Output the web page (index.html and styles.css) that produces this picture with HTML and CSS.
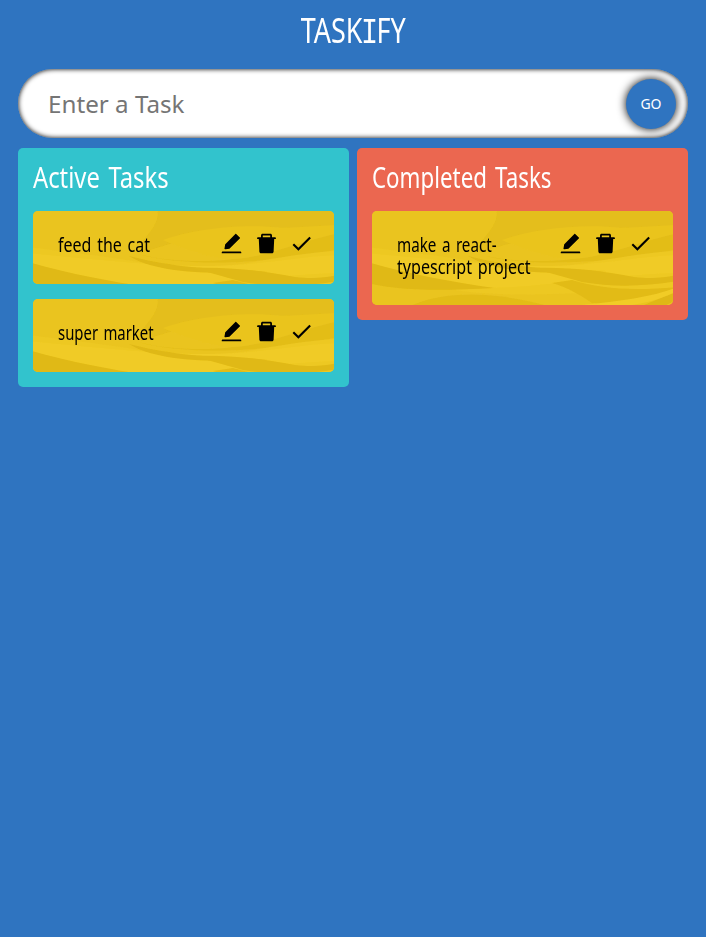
FILE: index.html
```html
<!DOCTYPE html>
<html lang="en">
<head>
<meta charset="utf-8">
<title>Taskify</title>
<link rel="stylesheet" href="styles.css">
</head>
<body>
<svg class="defs" aria-hidden="true">
  <defs>
    <filter id="soft" x="0" y="0" width="1" height="1"><feGaussianBlur stdDeviation="0.7"/></filter>
  </defs>
  <symbol id="waves" viewBox="0 0 301 94">
    <rect width="301" height="94" fill="#eac41f"/>
    <g filter="url(#soft)">
    <path d="M124 -5H306V22C250 10 170 20 108 42C100 30 130 20 124 -5Z" fill="#e4be1a"/>
    <path d="M130 29C160 18 210 12 250 17L306 14V55C250 60 180 52 130 29Z" fill="#eac41f"/>
    <path d="M306 22C260 32 235 46 200 48C170 52 130 50 105 43C150 56 230 54 306 38Z" fill="#e3bd19"/>
    <path d="M-5 36C40 42 80 46 110 52C190 66 230 44 306 40V78C230 80 150 88 90 80C50 74 30 70 -5 62Z" fill="#edc823"/>
    <path d="M-5 42C60 48 130 56 180 55C230 54 260 46 306 44V62C230 64 150 80 110 76C50 70 30 60 -5 52Z" fill="#f0cb26"/>
    <path d="M96 45C130 54 170 59 235 60C170 65 120 60 96 45Z" fill="#dfb814"/>
    <path d="M160 57C200 56 230 60 262 66C280 68 290 67 306 64V70C270 76 240 76 210 71Z" fill="#e0b915"/>
    <path d="M-5 51C40 64 80 71 122 77C70 80 30 80 -5 72Z" fill="#e0b915"/>
    <path d="M30 99C70 77 130 80 190 99Z" fill="#e3bc18"/>
    <path d="M200 69C230 78 260 80 306 76V81C270 90 240 94 220 92C208 84 195 76 180 72Z" fill="#e2bb17"/>
    <path d="M260 99L306 80V88L285 99Z" fill="#dfb814"/>
    <path d="M210 94C250 90 280 86 306 76V80C280 92 260 95 230 97Z" fill="#f1cc28"/>
    </g>
  </symbol>
  <symbol id="edit" viewBox="0 0 1024 1024"><path d="M880 836H144c-17.700 0-32 14.300-32 32v36c0 4.400 3.600 8 8 8h784c4.400 0 8-3.600 8-8v-36c0-17.700-14.300-32-32-32zM257.700 752c2 0 4-.2 6-.5L431.900 722c2-.4 3.900-1.300 5.300-2.800l423.900-423.900a9.960 9.960 0 000-14.100L694.900 114.900c-1.900-1.900-4.400-2.900-7.100-2.900s-5.200 1-7.100 2.900L256.800 538.800c-1.500 1.500-2.400 3.300-2.800 5.300l-29.500 168.200a33.500 33.500 0 009.400 29.800c6.600 6.400 14.900 9.900 23.800 9.900z"/></symbol>
  <symbol id="trash" viewBox="0 0 1024 1024"><path d="M864 256H736v-80c0-35.300-28.700-64-64-64H352c-35.300 0-64 28.700-64 64v80H160c-17.700 0-32 14.300-32 32v32c0 4.400 3.600 8 8 8h60.400l24.700 523c1.600 34.100 29.800 61 63.900 61h454c34.200 0 62.300-26.800 63.900-61l24.700-523H888c4.400 0 8-3.600 8-8v-32c0-17.700-14.300-32-32-32zm-200 0H360v-72h304v72z"/></symbol>
  <symbol id="check" viewBox="0 0 24 24"><path d="M9 16.170L4.830 12l-1.420 1.410L9 19 21 7l-1.410-1.410z"/></symbol>
</svg>
<main class="app">
  <h1 class="heading"><span class="narrow">TASK<span class="serif-i">I</span>FY</span></h1>
  <form class="input">
    <input class="input-box" type="text" placeholder="Enter a Task">
    <button class="input-submit" type="button">GO</button>
  </form>
  <div class="container">
    <section class="todos">
      <h2 class="todos-heading"><span class="narrow">Active Tasks</span></h2>
      <article class="card">
        <svg class="card-bg"><use href="#waves"/></svg>
        <p class="card-text"><span class="narrow feed">feed the cat</span></p>
        <div class="icons"><svg><use href="#edit"/></svg><svg><use href="#trash"/></svg><svg><use href="#check"/></svg></div>
      </article>
      <article class="card">
        <svg class="card-bg"><use href="#waves"/></svg>
        <p class="card-text"><span class="narrow market">super market</span></p>
        <div class="icons"><svg><use href="#edit"/></svg><svg><use href="#trash"/></svg><svg><use href="#check"/></svg></div>
      </article>
    </section>
    <section class="todos done">
      <h2 class="todos-heading"><span class="narrow">Completed Tasks</span></h2>
      <article class="card">
        <svg class="card-bg"><use href="#waves"/></svg>
        <p class="card-text"><span class="narrow make">make a react-</span><span class="narrow project">typescript project</span></p>
        <div class="icons"><svg><use href="#edit"/></svg><svg><use href="#trash"/></svg><svg><use href="#check"/></svg></div>
      </article>
    </section>
  </div>
</main>
</body>
</html>
```
FILE: styles.css
```css
* { box-sizing: border-box; }
body { margin: 0; min-height: 100vh; background: #2f74c0; font-family: "Noto Sans", sans-serif; }
.defs { display: block; width: 0; height: 0; }
.app { padding: 0 18px; }
.narrow { display: inline-block; white-space: nowrap; transform: scaleX(.75); transform-origin: left; }
.heading { margin: 0; height: 69px; padding-top: 7px; text-align: center; color: #fff; font-size: 35px; font-weight: 370; line-height: 46px; }
.heading .narrow { transform: scaleX(.77); transform-origin: center; }
.serif-i { margin: 0 -2px; font-family: "Liberation Mono", monospace; font-size: 37px; line-height: 1; }
.input { display: flex; position: relative; align-items: center; }
.input-box { width: 100%; height: 69px; padding: 0 30px; border: 0; border-radius: 50px; background: #fff; box-shadow: inset 0 0 5px #000; font-family: "Noto Sans", sans-serif; font-size: 24.2px; }
.input-box::placeholder { color: #757575; opacity: 1; }
.input-submit { position: absolute; right: 12px; top: 10px; width: 50px; height: 50px; padding: 0 0 2px; border: 0; border-radius: 50%; background: #2f74c0; color: #fff; box-shadow: 0 0 10px #000; font-family: "Noto Sans", sans-serif; font-size: 14px; }
.container { display: flex; gap: 8px; align-items: flex-start; margin-top: 10px; }
.todos { flex: 1; min-width: 0; padding: 15px; border-radius: 5px; background: #32c3cd; }
.done { background: #eb6750; }
.todos-heading { margin: 0; height: 33px; color: #fff; font-size: 29px; font-weight: 370; line-height: 28px; word-spacing: 3px; }
.todos-heading .narrow { transform: scaleX(.82); }
.done .todos-heading .narrow { transform: scaleX(.77); }
.card { position: relative; display: flex; justify-content: space-between; min-height: 73px; margin-top: 15px; padding: 23px 20px 27px 25px; border-radius: 5px; overflow: hidden; background: #eac41f; }
.card-bg { position: absolute; left: 0; top: 0; width: 301px; height: 94px; }
.card-text { position: relative; flex: 1; min-width: 0; margin: 0; color: #000; font-size: 20px; line-height: 22px; word-spacing: 2px; }
.card-text .narrow { display: block; width: max-content; }
.card-text .feed { transform: scaleX(.8); }
.card-text .market { transform: scaleX(.745); }
.card-text .make { transform: scaleX(.76); }
.card-text .project { transform: scaleX(.805); }
.icons { position: relative; display: flex; gap: 10px; height: 20px; }
.icons svg { width: 25px; height: 25px; margin-top: -3px; }
```
